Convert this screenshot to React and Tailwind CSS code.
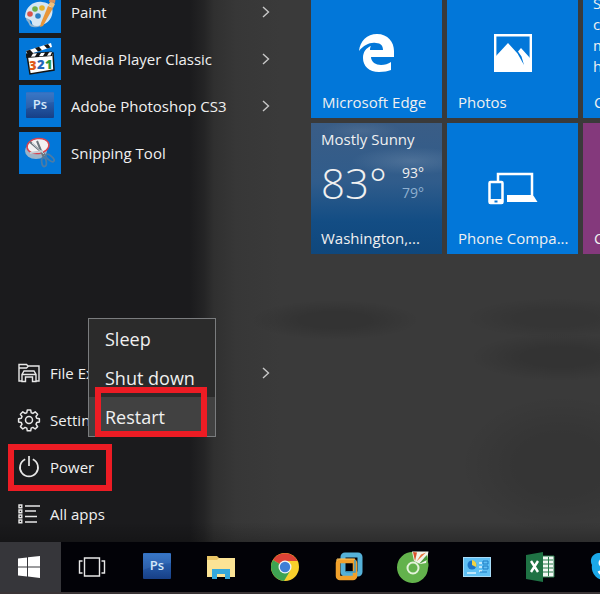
import React from 'react';

const PaintIcon = () => (
  <svg viewBox="0 0 42 42" className="w-full h-full" aria-hidden="true">
    <path d="M6 25C7 15 15 10 23 11c9 1 12 6 10 13-2 8-11 12-18 11-3-1-1-5-4-6-2-1-5-1-5-4z" fill="#d5e6f3" />
    <path d="M7 27c3 1 4 1 4 4 1 4 7 5 12 3l-1 1c-5 2-11 2-12-2-1-3-3-3-3-6z" fill="#8fb2cd" />
    <circle cx="11" cy="23" r="2.800" fill="#d9534a" />
    <circle cx="16" cy="18" r="2.800" fill="#6fb04a" />
    <circle cx="23" cy="17" r="2.800" fill="#e3b32f" />
    <circle cx="19" cy="25" r="2.800" fill="#2b7fc4" />
    <path d="M29 15l5 2-10 18-3 1 1-4z" fill="#e8963a" />
    <path d="M29 14l3-4 4 3-2 4z" fill="#f0c07c" />
    <path d="M30 11l2-9 5 2-1 8z" fill="#d9905a" />
  </svg>
);

const MediaIcon = () => (
  <svg viewBox="0 0 42 42" className="w-full h-full" aria-hidden="true">
    <path d="M7 13L32 5l1 4L8 17z" fill="#fff" />
    <path d="M7 13l4-1.300 3 3.400-5 1.600zM16 10l4-1.300 3 3.500-4 1.200zM25 7.200l4-1.200 2.500 3.500-3.500 1z" fill="#141414" />
    <path d="M8 17l26-2 1 17-24 4z" fill="#fff" stroke="#141414" strokeWidth="1.500" />
    <path d="M7 15.500l26-2 .4 4.500-26 2z" fill="#141414" />
    <path d="M14 15.500l4-.3-2 3.300-4 .3zM22 15l4-.3-2 3.300-4 .3zM30 14.400l3-.3-1.500 3.300-3.500.3z" fill="#fff" />
    <g fontFamily="Open Sans, sans-serif" fontSize="13" fontWeight="800">
      <text x="10" y="32" fill="#e05a1c">3</text>
      <text x="18" y="31" fill="#2568b8">2</text>
      <text x="26" y="31" fill="#2c9a3c">1</text>
    </g>
  </svg>
);

const PhotoshopIcon = () => (
  <svg viewBox="0 0 28 28" className="w-7 h-7" aria-hidden="true">
    <defs>
      <linearGradient id="ps" x1="0" y1="0" x2="0" y2="1">
        <stop offset="0" stopColor="#3272c4" />
        <stop offset="1" stopColor="#173f86" />
      </linearGradient>
    </defs>
    <rect width="28" height="26" rx="1" fill="url(#ps)" />
    <path d="M0 1h28v9Q14 11 0 17z" fill="#5a8fd6" opacity=".2" />
    <text x="14" y="17" textAnchor="middle" fontFamily="Open Sans, sans-serif" fontSize="13" fontWeight="600" fill="#d5e8fa">Ps</text>
  </svg>
);

const SnipIcon = () => (
  <svg viewBox="0 0 42 42" className="w-full h-full" aria-hidden="true">
    <ellipse cx="17" cy="19" rx="11" ry="8" fill="#9db4c8" />
    <ellipse cx="19" cy="14" rx="11" ry="7.500" transform="rotate(-8 19 14)" fill="#f3f1f2" stroke="#d8444f" strokeWidth="1.500" />
    <path d="M11 10l15 13M18 9l7 17" stroke="#6b747c" strokeWidth="2" />
    <path d="M13 11l12 11" stroke="#cfd6dc" strokeWidth="1" />
    <path d="M11 21l13-2" stroke="#c4ccd4" strokeWidth="2" />
    <g fill="none" stroke="#4c7ba5" strokeWidth="1.800">
      <ellipse cx="31" cy="26" rx="5" ry="2.200" transform="rotate(40 31 26)" />
      <ellipse cx="25" cy="30" rx="2.300" ry="4.500" transform="rotate(-8 25 30)" />
    </g>
  </svg>
);

const FolderIcon = () => (
  <svg viewBox="0 0 22 20" className="w-[22px] h-5" fill="none" stroke="#e8e8e8" strokeWidth="1.400" aria-hidden="true">
    <path d="M4 18H1V1.500h7.500l1.500 1.500h11v15h-3M1 5h7.500l2-2" />
    <path d="M4 18.500v-7L6 8h10l2 3.500v7h-3.500V14h-7v4.500zM4.500 11.500h13" />
  </svg>
);

const GearIcon = () => (
  <svg viewBox="0 0 24 24" className="w-6 h-6" fill="none" stroke="#e8e8e8" strokeWidth="1.500" strokeLinejoin="round" aria-hidden="true">
    <circle cx="12" cy="12" r="3.500" />
    <path d="M10.300 2h3.400l.5 2.700 1.700.7 2.300-1.600 2.400 2.400-1.600 2.300.7 1.700 2.700.5v3.400l-2.700.5-.7 1.700 1.600 2.300-2.400 2.400-2.300-1.600-1.700.7-.5 2.700h-3.400l-.5-2.700-1.700-.7-2.300 1.600-2.400-2.400L5 16.300l-.7-1.700-2.700-.5v-3.400l2.700-.5L5 8.500 3.400 6.200l2.400-2.400 2.300 1.600 1.700-.7z" />
  </svg>
);

const PowerIcon = () => (
  <svg viewBox="0 0 22 22" className="w-[22px] h-[22px]" fill="none" stroke="#e8e8e8" strokeWidth="1.700" aria-hidden="true">
    <path d="M7.200 3.300a9 9 0 1 0 7.600 0M11 0v10" />
  </svg>
);

const AllAppsIcon = () => (
  <svg viewBox="0 0 22 20" className="w-[22px] h-5" fill="none" stroke="#e8e8e8" strokeWidth="1.400" aria-hidden="true">
    <path d="M7 2h15M7 7h11M7 12.500h12M7 18h12" />
    <path d="M1 1h2.800v2.800H1zM1 6h2.800v2.800H1zM1 11h2.800v2.800H1zM1 16h2.800v2.800H1z" />
  </svg>
);

const Chevron = () => (
  <svg viewBox="0 0 8 12" className="w-2 h-3" fill="none" stroke="#c8c8c8" strokeWidth="1.400" aria-hidden="true">
    <path d="M1 1l5.500 5L1 11" />
  </svg>
);

const EdgeIcon = () => (
  <svg viewBox="0 0 36 38" className="w-9 h-[38px]" fill="#fff" aria-hidden="true">
    <path d="M0 17C1 7 8 0 18 0c11 0 17 8 17 17v6H12c0 5 5 8 10 8 4 0 7-1 10-3v8c-3 1-7 2-12 2C10 38 4 32 4 24c0-6 3-10 8-12-.6 1-1 2-1 4h13c0-4-2-7-7-7C11 8 5 11 0 17z" />
  </svg>
);

const PhotosIcon = () => (
  <svg viewBox="0 0 38 38" className="w-[38px] h-[38px]" aria-hidden="true">
    <path d="M1.200 1.200h35.600v35.600H1.200z" fill="none" stroke="#fff" strokeWidth="2.400" />
    <path d="M2 22L14 9l9.500 10.500L30 31l-2.500-8.500L24 17.500l3-3.500 9 10v13H2z" fill="#fff" />
  </svg>
);

const PhoneIcon = () => (
  <svg viewBox="0 0 50 34" className="w-[50px] h-[34px]" aria-hidden="true">
    <path d="M10 9V2h34v21" fill="none" stroke="#fff" strokeWidth="2.500" />
    <path d="M19 23h26l4.500 7H19z" fill="#fff" />
    <rect x="1.500" y="10" width="13" height="21" rx="1" fill="none" stroke="#fff" strokeWidth="2.500" />
    <path d="M1 27h14v5H1z" fill="#fff" />
    <path d="M6.500 28.500h3v2h-3z" fill="#0277d9" />
  </svg>
);

const WindowsIcon = () => (
  <svg viewBox="0 0 22 22" className="w-[22px] h-[22px]" fill="#fff" aria-hidden="true">
    <path d="M0 2.500l9-1.100V10.400H0zM10 1.300L22 0v10.400H10zM0 11.400h9v9L0 19.400zM10 11.400h12V22l-12-1.500z" />
  </svg>
);

const TaskViewIcon = () => (
  <svg viewBox="0 0 28 20" className="w-7 h-5" fill="none" stroke="#e8e8e8" strokeWidth="1.400" aria-hidden="true">
    <path d="M6.500 1h15v18h-15zM4.500 4H1.500v12h3M23.500 4h3v12h-3" />
  </svg>
);

const ExplorerIcon = () => (
  <svg viewBox="0 0 28 26" className="w-7 h-[26px]" aria-hidden="true">
    <path d="M0 2h10l2 2h16v19H0z" fill="#e9c566" />
    <path d="M0 6h10l2-2h16v19H0z" fill="#fbe395" />
    <path d="M5 15h18v10h-5v-5h-8v5H5z" fill="#35a9dc" />
  </svg>
);

const ChromeIcon = () => (
  <svg viewBox="0 0 28 28" className="w-7 h-7" aria-hidden="true">
    <circle cx="14" cy="14" r="14" fill="#f9cf2b" />
    <path d="M14 14L1.900 7A14 14 0 0 1 26.500 8H14z" fill="#dc4236" />
    <path d="M14 14L1.900 7A14 14 0 0 0 13 28l6-10z" fill="#3ea352" />
    <circle cx="14" cy="14" r="6.500" fill="#f2f5f8" />
    <circle cx="14" cy="14" r="5.200" fill="#3d7fd6" />
  </svg>
);

const VmwareIcon = () => (
  <svg viewBox="0 0 28 30" className="w-7 h-[30px]" fill="none" aria-hidden="true">
    <rect x="8" y="3" width="17" height="19" rx="2" stroke="#55b1d8" strokeWidth="5" />
    <rect x="3" y="9" width="17" height="17" rx="2" stroke="#f0a12c" strokeWidth="4.500" />
    <path d="M20 8v12h-9" stroke="#3d9cc8" strokeWidth="1.500" />
    <path d="M2 9V7h18" stroke="#f8c463" strokeWidth="1" />
  </svg>
);

const CocCocIcon = () => (
  <svg viewBox="0 0 32 32" className="w-8 h-8" aria-hidden="true">
    <path d="M16 1h15v10q1 3 0 6a15.500 15.500 0 1 1-15-16z" fill="#63b24c" />
    <path d="M15 .5h16.500L29 12l-6 1-6-3z" fill="#f2f5ea" />
    <path d="M16 1l4 .5-2 8.500z" fill="#d9532c" />
    <path d="M19.500 10.500l4.500-7 5-2z" fill="#e8743a" />
    <path d="M22 13l6-7 2-2v5z" fill="#4a9b3c" />
    <circle cx="16" cy="17" r="5.500" fill="#63b24c" stroke="#e4f2da" strokeWidth="2" />
  </svg>
);

const ControlIcon = () => (
  <svg viewBox="0 0 28 20" className="w-7 h-5" aria-hidden="true">
    <rect x=".5" y=".5" width="27" height="19" fill="#5fc0f4" stroke="#a8dcf8" />
    <circle cx="9" cy="8" r="4.500" fill="#1c74c8" />
    <path d="M9 8V3a5 5 0 0 1 4 7z" fill="#f4d444" />
    <path d="M16 6h3M16 10h3M16 14h3M4 16h9" stroke="#dff2fc" strokeWidth="1.500" />
    <path d="M20 4h5v3h-5zM20 9h5v3h-5zM17 15h7" fill="none" stroke="#1f7cc4" />
  </svg>
);

const ExcelIcon = () => (
  <svg viewBox="0 0 30 30" className="w-[30px] h-[30px]" aria-hidden="true">
    <path d="M15 4h13v21H15z" fill="#f2f8f4" stroke="#2a7a4c" />
    <path d="M17 8h10M17 12h10M17 16h10M17 20h10M22.500 5v19" stroke="#2a7a4c" strokeWidth="1" />
    <path d="M0 3l17-3v30L0 27z" fill="#1f7244" />
    <path d="M5 9l7 11M12 9L5 20" stroke="#fff" strokeWidth="2.400" />
  </svg>
);

const SkypeIcon = () => (
  <svg viewBox="0 0 30 30" className="w-[30px] h-[30px]" aria-hidden="true">
    <path d="M8 1a8 8 0 0 1 5 1 13 13 0 0 1 15 15 8 8 0 0 1-11 11A13 13 0 0 1 2 13 8 8 0 0 1 8 1z" fill="#1ba8e8" />
    <path d="M20 10c-2-4-10-3-10 1 0 5 10 3 10 8 0 4-9 5-11 0" fill="none" stroke="#fff" strokeWidth="3" />
  </svg>
);

const apps = [
  { name: 'Paint', icon: <PaintIcon />, more: true },
  { name: 'Media Player Classic', icon: <MediaIcon />, more: true },
  { name: 'Adobe Photoshop CS3', icon: <PhotoshopIcon />, more: true },
  { name: 'Snipping Tool', icon: <SnipIcon />, more: false },
];

const taskbar = [
  { name: 'Photoshop', icon: <PhotoshopIcon /> },
  { name: 'File Explorer', icon: <ExplorerIcon /> },
  { name: 'Chrome', icon: <ChromeIcon /> },
  { name: 'VMware', icon: <VmwareIcon /> },
  { name: 'Coc Coc', icon: <CocCocIcon /> },
  { name: 'Control Panel', icon: <ControlIcon /> },
  { name: 'Excel', icon: <ExcelIcon /> },
  { name: 'Skype', icon: <SkypeIcon /> },
];

const SystemItem = ({ icon, label, more }) => (
  <button className="flex items-center w-full h-[47px] pl-[17px] pr-8 text-left">
    <span className="flex justify-center w-6 mr-[9px]">{icon}</span>
    <span className="flex-1">{label}</span>
    {more && <Chevron />}
  </button>
);

const Tile = ({ label, icon, className = 'bg-[#0277d9]' }) => (
  <button className={`relative flex items-center justify-center w-[131px] h-[131px] ${className}`}>
    {icon}
    <span className="absolute left-[11px] bottom-1 whitespace-nowrap">{label}</span>
  </button>
);

const App = () => {
  return (
    <div className="flex flex-col min-h-screen overflow-hidden bg-black font-['Open_Sans',sans-serif] text-[15px] leading-6 text-[#f0f0f0]">
      <main className="flex flex-1 bg-[linear-gradient(to_top,#00000038,transparent_20px),radial-gradient(ellipse_85px_20px_at_335px_320px,#00000020_40%,transparent),radial-gradient(ellipse_90px_20px_at_555px_318px,#00000018_40%,transparent),radial-gradient(ellipse_90px_24px_at_560px_357px,#00000020_40%,transparent),radial-gradient(ellipse_100px_70px_at_560px_465px,#00000018_40%,transparent),linear-gradient(to_right,#1b1b1d_190px,#242425_204px,#303030_214px,#373737_236px,#3a3a3a_280px)] overflow-hidden">
        {/* App list */}
        <div className="flex flex-col justify-between shrink-0 w-[302px] pb-[5px]">
          <ul className="flex flex-col gap-[5px] -mt-[9px]">
            {apps.map((app) => (
              <li key={app.name}>
                <button className="flex items-center w-full pl-[19px] pr-8 text-left">
                  <span className="flex items-center justify-center w-[42px] h-[42px] mr-[10px] bg-[#0277d9]">
                    {app.icon}
                  </span>
                  <span className="flex-1">{app.name}</span>
                  {app.more && <Chevron />}
                </button>
              </li>
            ))}
          </ul>

          <nav>
            <SystemItem icon={<FolderIcon />} label="File Explorer" more />
            <SystemItem icon={<GearIcon />} label="Settings" />
            <div className="relative">
              <SystemItem icon={<PowerIcon />} label="Power" />
              <span className="absolute left-2 top-px w-[104px] h-[47px] border-[6px] border-[#ed1c24] pointer-events-none" />

              {/* Power menu */}
              <div className="absolute left-[88px] bottom-[53px] w-32 border border-[#7a7c7e] bg-[#2b2b2b] text-lg">
                <button className="block w-full h-[39px] pl-4 text-left">Sleep</button>
                <button className="block w-full h-[39px] pl-4 text-left">Shut down</button>
                <button className="relative block w-full h-[39px] pl-4 text-left bg-[#414141]">
                  Restart
                  <span className="absolute left-[6px] -bottom-px w-[112px] h-[50px] border-[6px] border-[#ed1c24] pointer-events-none" />
                </button>
              </div>
            </div>
            <SystemItem icon={<AllAppsIcon />} label="All apps" />
          </nav>
        </div>

        {/* Tiles */}
        <div className="grid grid-cols-[131px_131px_131px] auto-rows-[131px] gap-[5px] content-start pl-[9px] -mt-[13px]">
          <Tile label="Microsoft Edge" icon={<EdgeIcon />} />
          <Tile label="Photos" icon={<PhotosIcon />} />
          <button className="relative bg-[#0277d9] text-left">
            <span className="absolute left-[10px] top-[6px] leading-[21px]">
              S<br />c<br />m<br />h
            </span>
            <span className="absolute left-[11px] bottom-1">C</span>
          </button>
          <button className="flex flex-col px-[10px] py-1 text-left bg-[radial-gradient(ellipse_60px_14px_at_100px_38px,#ffffff20,transparent),radial-gradient(ellipse_40px_10px_at_50px_8px,#ffffff14,transparent),linear-gradient(to_bottom,#3a5d86,#305c8b_45%,#134d84_75%,#0f477c)]">
            <span className="whitespace-nowrap">Mostly Sunny</span>
            <span className="flex flex-1 items-center justify-between pr-2 pb-3">
              <span className="text-[42px] leading-10 font-light">83°</span>
              <span className="text-sm leading-5">
                93°<br />
                <span className="text-[#8fb0d0]">79°</span>
              </span>
            </span>
            <span className="whitespace-nowrap">Washington,...</span>
          </button>
          <Tile label="Phone Compa..." icon={<PhoneIcon />} />
          <Tile label="C" className="bg-[#84397c]" />
        </div>
      </main>

      {/* Taskbar */}
      <footer className="flex items-center shrink-0 h-[52px] overflow-hidden bg-[#020207] border-b-2 border-[#3a3436]">
        <button aria-label="Start" className="flex items-center justify-center shrink-0 w-[61px] h-full pr-[3px] bg-[#36363a]">
          <WindowsIcon />
        </button>
        <button aria-label="Task View" className="flex items-center justify-center shrink-0 w-16 h-full pr-[3px]">
          <TaskViewIcon />
        </button>
        {taskbar.map((item) => (
          <button key={item.name} aria-label={item.name} className="flex items-center justify-center shrink-0 w-16 h-full">
            {item.icon}
          </button>
        ))}
      </footer>
    </div>
  );
};

export default App;
